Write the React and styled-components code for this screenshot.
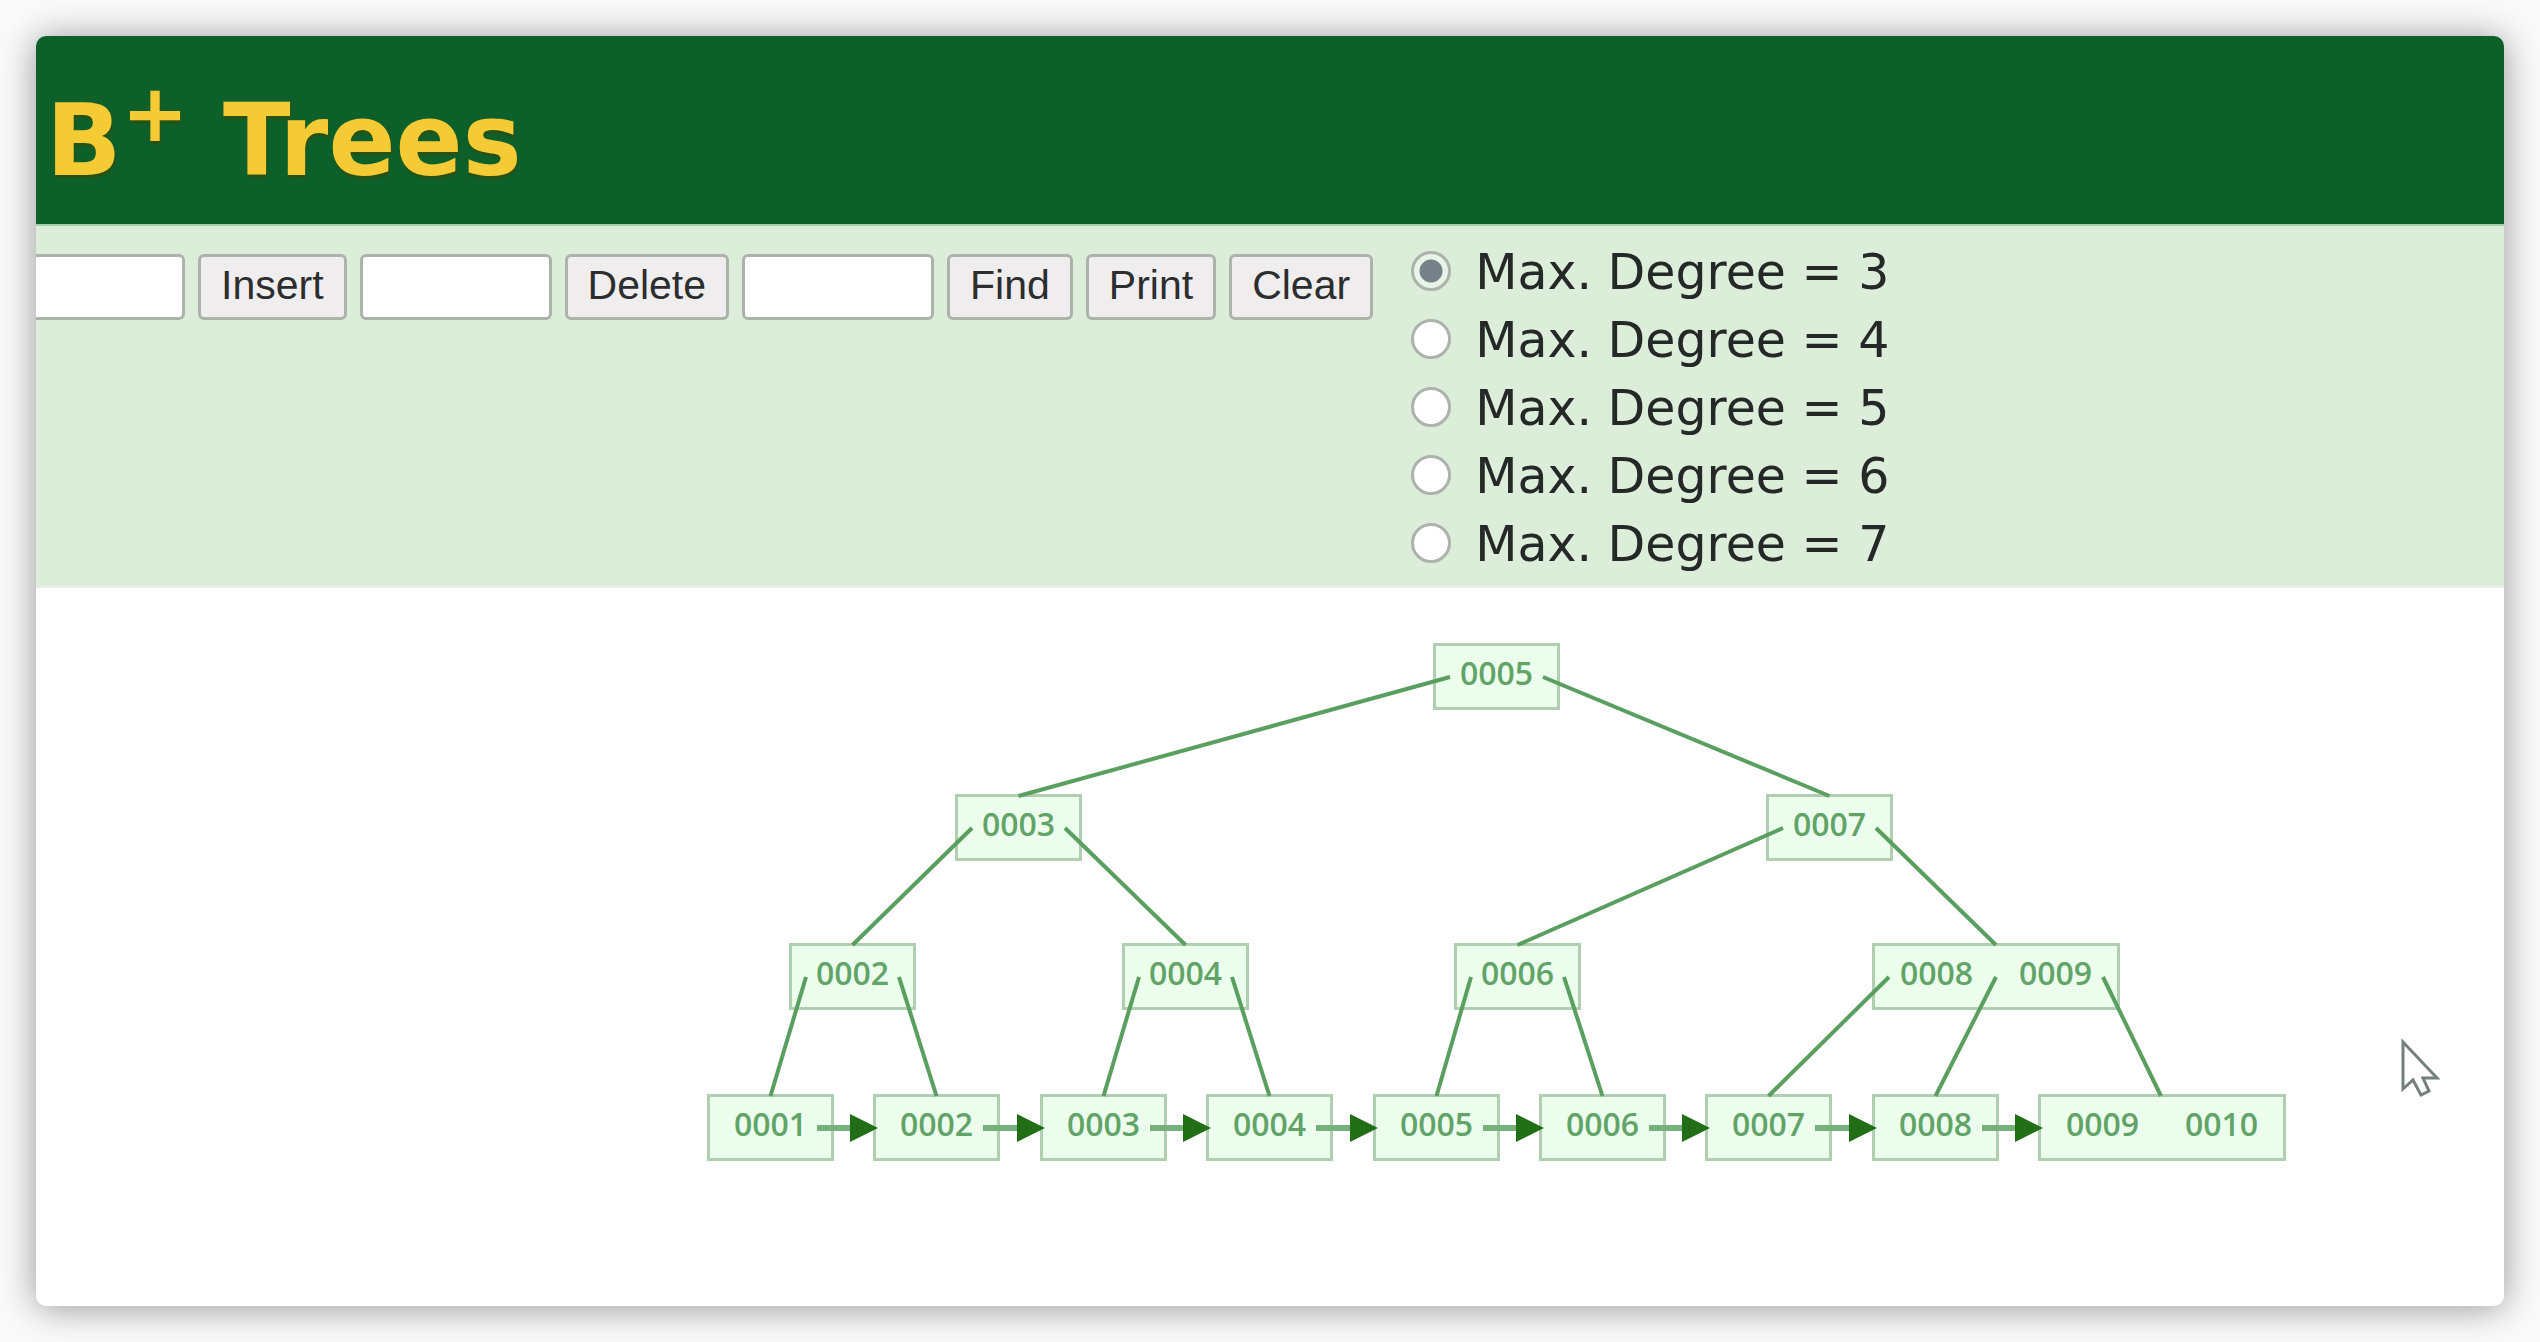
import React, { useState } from "react";
import styled, { createGlobalStyle } from "styled-components";

const GlobalStyle = createGlobalStyle`
  * { box-sizing: border-box; }
  body {
    margin: 0;
    background: #fafafa;
    font-family: "DejaVu Sans", Verdana, sans-serif;
  }
`;

const Page = styled.div`
  display: flex;
  min-height: 100vh;
  padding: 36px;
`;

const Card = styled.main`
  flex: 1;
  display: flex;
  flex-direction: column;
  overflow: hidden;
  border-radius: 10px;
  background: #fff;
  box-shadow: 0 2px 36px rgba(0, 0, 0, 0.4);
`;

const Header = styled.header`
  padding: 45px 10px 23px;
  background: #0e602b;
`;

const Title = styled.h1`
  margin: 0;
  color: #f4ca35;
  font-size: 99px;
  line-height: 120px;
  text-shadow: 1px 3px 2px rgba(60, 70, 0, 0.6);
`;

const Raised = styled.sup`
  font-size: 80px;
  line-height: 0;
`;

const Controls = styled.form`
  display: flex;
  align-items: flex-start;
  gap: 38px;
  padding: 13px 0 7px;
  margin: 0;
  border-top: 2px solid #a5cfa8;
  border-bottom: 2px solid #ececec;
  background: #dcedda;
`;

const Commands = styled.div`
  display: flex;
  gap: 13px;
  margin-left: -43px;
  padding-top: 15px;
`;

const control = `
  height: 66px;
  border: 3px solid #abb3ab;
  border-radius: 6px;
  font-family: "Liberation Sans", Arial, sans-serif;
  font-size: 41px;
  line-height: 48px;
`;

const Field = styled.input`
  ${control}
  width: 192px;
  padding: 0 8px;
  background: #fff;
`;

const Button = styled.button`
  ${control}
  padding: 0 20px 4px;
  background: #efedee;
  color: #2b2d2e;
`;

const Degrees = styled.fieldset`
  margin: 0;
  padding: 0;
  border: 0;
  min-width: 0;
`;

const Degree = styled.label`
  display: flex;
  align-items: center;
  gap: 24px;
  color: #242827;
  font-size: 49px;
  line-height: 68px;
  white-space: nowrap;
`;

const Radio = styled.input`
  appearance: none;
  width: 40px;
  height: 40px;
  margin: 0 0 4px;
  border: 3px solid #abb3ab;
  border-radius: 50%;
  background: #fff;
  &:checked {
    background: radial-gradient(circle, #78808a 11px, #e8f4e8 12px);
  }
`;

const Canvas = styled.section`
  position: relative;
  flex: 1;
`;

const Node = styled.div`
  position: absolute;
  left: ${(p) => p.$x}px;
  top: ${(p) => p.$y}px;
  width: ${(p) => p.$w}px;
  height: 67px;
  display: flex;
  justify-content: space-around;
  padding: 0 2px;
  border: 3px solid #b0ceb0;
  background: #ecffec;
  color: #62a368;
  font-family: "Open Sans", "Noto Sans", sans-serif;
  font-size: 32px;
  font-weight: 600;
  line-height: 54px;
`;

const Drawing = styled.svg`
  position: absolute;
  inset: 0;
  width: 100%;
  height: 100%;
`;

const SINGLE = 127;
const DOUBLE = 248;
const HALF = 34;
const INSET = 17;

const inner = {
  root: { x: 1397, y: 55, keys: ["0005"] },
  a: { x: 919, y: 206, keys: ["0003"] },
  b: { x: 1730, y: 206, keys: ["0007"] },
  c: { x: 753, y: 355, keys: ["0002"] },
  d: { x: 1086, y: 355, keys: ["0004"] },
  e: { x: 1418, y: 355, keys: ["0006"] },
  f: { x: 1836, y: 355, keys: ["0008", "0009"] },
};

const leaves = [
  ["0001"], ["0002"], ["0003"], ["0004"], ["0005"],
  ["0006"], ["0007"], ["0008"], ["0009", "0010"],
].map((keys, i) => ({ x: Math.round(671 + i * 166.4), y: 506, keys }));

const width = (n) => (n.keys.length > 1 ? DOUBLE : SINGLE);

const family = [
  [inner.root, [inner.a, inner.b]],
  [inner.a, [inner.c, inner.d]],
  [inner.b, [inner.e, inner.f]],
  [inner.c, leaves.slice(0, 2)],
  [inner.d, leaves.slice(2, 4)],
  [inner.e, leaves.slice(4, 6)],
  [inner.f, leaves.slice(6, 9)],
];

const edges = family.flatMap(([parent, children]) =>
  children.map((child, i) => ({
    x1: parent.x + INSET + ((width(parent) - 2 * INSET) * i) / (children.length - 1),
    y1: parent.y + HALF,
    x2: child.x + (child.keys.length > 1 && parent === inner.f ? 123 : width(child) / 2),
    y2: child.y + 2,
  }))
);

function Tree() {
  return (
    <Canvas aria-label="Tree">
      {[...Object.values(inner), ...leaves].map((n, i) => (
        <Node key={i} $x={n.x} $y={n.y} $w={width(n)}>
          {n.keys.map((k) => <span key={k}>{k}</span>)}
        </Node>
      ))}
      <Drawing aria-hidden="true">
        <g stroke="#5a9f60" strokeWidth="4">
          {edges.map((e, i) => <line key={i} {...e} />)}
        </g>
        {leaves.slice(0, -1).map((n, i) => {
          const from = n.x + SINGLE - INSET;
          const tip = leaves[i + 1].x + 5;
          const y = n.y + HALF;
          return (
            <g key={i}>
              <line x1={from} y1={y} x2={tip - 26} y2={y} stroke="#76b07a" strokeWidth="6" />
              <path d={`M${tip} ${y}l-28 -14v28z`} fill="#226e16" />
            </g>
          );
        })}
        <path
          d="M2367 454v47l10 -9l8 15l8 -4l-6 -13h14z"
          fill="#fff" stroke="#75807c" strokeWidth="3"
        />
      </Drawing>
    </Canvas>
  );
}

export default function App() {
  const [degree, setDegree] = useState(3);
  return (
    <Page>
      <GlobalStyle />
      <Card>
        <Header>
          <Title>B<Raised>+</Raised> Trees</Title>
        </Header>
        <Controls onSubmit={(e) => e.preventDefault()}>
          <Commands>
            <Field aria-label="Value to insert" />
            <Button type="button">Insert</Button>
            <Field aria-label="Value to delete" />
            <Button type="button">Delete</Button>
            <Field aria-label="Value to find" />
            <Button type="button">Find</Button>
            <Button type="button">Print</Button>
            <Button type="button">Clear</Button>
          </Commands>
          <Degrees aria-label="Max. Degree">
            {[3, 4, 5, 6, 7].map((n) => (
              <Degree key={n}>
                <Radio
                  type="radio"
                  name="degree"
                  checked={degree === n}
                  onChange={() => setDegree(n)}
                />
                Max. Degree = {n}
              </Degree>
            ))}
          </Degrees>
        </Controls>
        <Tree />
      </Card>
    </Page>
  );
}
